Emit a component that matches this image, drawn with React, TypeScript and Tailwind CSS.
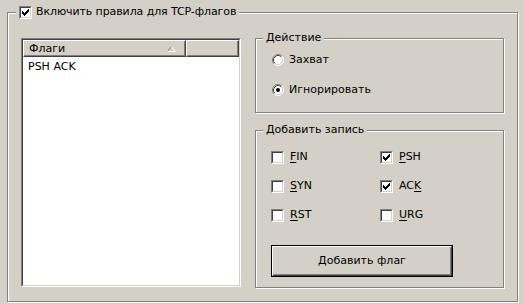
import React from "react";

const bevelSunken =
  "border border-t-[#808080] border-l-[#808080] border-b-white border-r-white";

function Check({ checked }: { checked?: boolean }) {
  return (
    <span className={`block w-[13px] h-[13px] shrink-0 ${bevelSunken}`}>
      <span className="block w-full h-full bg-white border border-t-[#404040] border-l-[#404040] border-b-[#d4d0c8] border-r-[#d4d0c8]">
        {checked && (
          <svg width="9" height="9" viewBox="0 0 9 9" shapeRendering="crispEdges" className="block">
            <path
              fill="#000"
              d="M7 1h1v1h-1zM6 2h2v1h-2zM1 3h1v1h-1zM5 3h3v1h-3zM1 4h2v1h-2zM4 4h3v1h-3zM1 5h5v1h-5zM2 6h3v1h-3zM3 7h1v1h-1z"
            />
          </svg>
        )}
      </span>
    </span>
  );
}

function Radio({ checked }: { checked?: boolean }) {
  return (
    <svg width="12" height="12" viewBox="0 0 12 12" className="block shrink-0">
      <circle cx="6" cy="6" r="5" fill="#fff" />
      <path d="M2.11 9.89A5.5 5.5 0 0 1 9.89 2.11" stroke="#808080" fill="none" />
      <path d="M9.89 2.11A5.5 5.5 0 0 1 2.11 9.89" stroke="#fff" fill="none" />
      <path d="M2.82 9.18A4.5 4.5 0 0 1 9.18 2.82" stroke="#404040" fill="none" />
      <path d="M9.18 2.82A4.5 4.5 0 0 1 2.82 9.18" stroke="#d4d0c8" fill="none" />
      {checked && <circle cx="6" cy="6" r="2" fill="#000" />}
    </svg>
  );
}

function Flag({ label, hot, checked }: { label: string; hot: number; checked?: boolean }) {
  return (
    <div className="flex items-center gap-[6px] h-[14px]">
      <Check checked={checked} />
      <span>
        {label.slice(0, hot)}
        <span className="underline underline-offset-2">{label[hot]}</span>
        {label.slice(hot + 1)}
      </span>
    </div>
  );
}

export default function App() {
  return (
    <div className="w-[524px] h-[304px] bg-[#d4d0c8] pt-[5px] pl-[7px] text-[11px] leading-[14px] text-black font-['DejaVu_Sans',sans-serif]">
      <fieldset className="w-[511px] h-[297px] border border-[#808080] shadow-[inset_1px_1px_0_#fff,1px_1px_0_#fff] px-[13px]">
        <legend className="-ml-[5px] px-[3px] bg-[#d4d0c8]">
          <span className="flex items-center gap-[4px] h-[14px] tracking-[-0.1px]">
            <Check checked />
            Включить правила для TCP-флагов
          </span>
        </legend>

        <div className="flex gap-[14px]">
          {/* list */}
          <div className={`mt-[19px] w-[220px] h-[249px] ${bevelSunken}`}>
            <div className="w-full h-full bg-white border border-t-[#404040] border-l-[#404040] border-b-[#d4d0c8] border-r-[#d4d0c8]">
              <div className="flex h-[17px]">
                <div className="w-[163px] flex items-center justify-between pl-[5px] pr-[9px] bg-[#d4d0c8] border border-t-white border-l-white border-r-[#404040] border-b-[#404040] shadow-[inset_-1px_-1px_0_#808080]">
                  <span>Флаги</span>
                  <svg width="9" height="6" viewBox="0 0 9 6" className="block">
                    <path d="M0.5 5.5L4.5 0.5" stroke="#808080" fill="none" />
                    <path d="M4.5 0.5L8.5 5.5H0.5" stroke="#fff" fill="none" />
                  </svg>
                </div>
                <div className="flex-1 bg-[#d4d0c8] border border-t-white border-l-white border-r-[#404040] border-b-[#404040] shadow-[inset_-1px_-1px_0_#808080]" />
              </div>
              <div className="pl-[5px] pt-[3px]">PSH ACK</div>
            </div>
          </div>

          {/* right */}
          <div className="w-[249px] flex flex-col">
            <fieldset className="mt-[12px] h-[82px] border border-[#808080] shadow-[inset_1px_1px_0_#fff,1px_1px_0_#fff] pl-[16px]">
              <legend className="-ml-[9px] px-[3px] bg-[#d4d0c8] h-[14px]">Действие</legend>
              <div className="mt-[8px] flex flex-col gap-[16px]">
                <div className="flex items-center gap-[5px] h-[14px]">
                  <Radio />
                  <span>Захват</span>
                </div>
                <div className="flex items-center gap-[5px] h-[14px]">
                  <Radio checked />
                  <span>Игнорировать</span>
                </div>
              </div>
            </fieldset>

            <fieldset className="mt-[10px] h-[165px] border border-[#808080] shadow-[inset_1px_1px_0_#fff,1px_1px_0_#fff] pl-[15px]">
              <legend className="-ml-[8px] px-[3px] bg-[#d4d0c8] h-[14px]">Добавить запись</legend>
              <div className="mt-[13px] grid grid-cols-[109px_1fr] gap-y-[15px]">
                <Flag label="FIN" hot={0} />
                <Flag label="PSH" hot={0} checked />
                <Flag label="SYN" hot={0} />
                <Flag label="ACK" hot={2} checked />
                <Flag label="RST" hot={0} />
                <Flag label="URG" hot={0} />
              </div>
              <button className="mt-[23px] w-[182px] h-[32px] border border-black block">
                <span className="flex items-center justify-center w-full h-full border border-t-white border-l-white border-r-[#404040] border-b-[#404040] shadow-[inset_-1px_-1px_0_#808080]">
                  Добавить флаг
                </span>
              </button>
            </fieldset>
          </div>
        </div>
      </fieldset>
    </div>
  );
}
